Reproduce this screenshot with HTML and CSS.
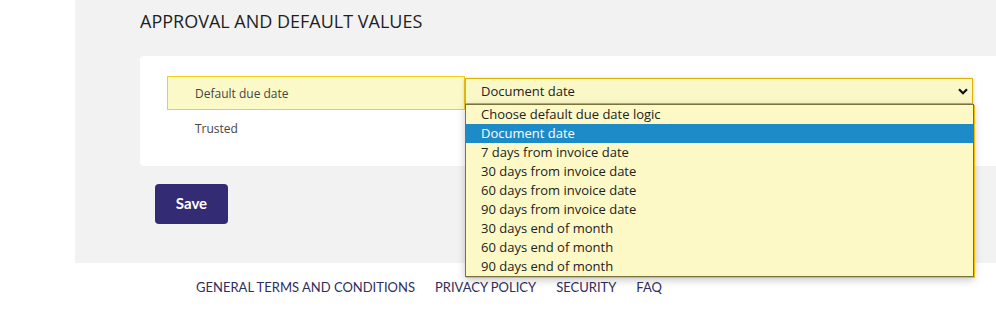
FILE: index.html
```html
<!DOCTYPE html>
<html lang="en">
<head>
  <meta charset="UTF-8">
  <meta name="viewport" content="width=device-width, initial-scale=1.0">
  <title>Approval and default values</title>
  <link rel="stylesheet" href="styles.css">
</head>
<body>
  <div class="layout">
    <div class="gutter"></div>
    <main class="main">
      <h2 class="section-title">APPROVAL AND DEFAULT VALUES</h2>

      <div class="card">
        <div class="field-row">
          <div class="field-label active">Default due date</div>
          <div class="select-wrap">
            <div class="select">
              <span>Document date</span>
              <svg class="chevron" width="10" height="7" viewBox="0 0 10 7">
                <path d="M1 1.2 L5 5.2 L9 1.2" fill="none" stroke="#111" stroke-width="2.2"/>
              </svg>
            </div>
            <ul class="options">
              <li>Choose default due date logic</li>
              <li class="selected">Document date</li>
              <li>7 days from invoice date</li>
              <li>30 days from invoice date</li>
              <li>60 days from invoice date</li>
              <li>90 days from invoice date</li>
              <li>30 days end of month</li>
              <li>60 days end of month</li>
              <li>90 days end of month</li>
            </ul>
          </div>
        </div>
        <div class="field-row plain">
          <div class="field-label">Trusted</div>
        </div>
      </div>

      <button class="btn-save">Save</button>
    </main>
  </div>

  <footer class="footer">
    <a href="#">General terms and conditions</a>
    <a href="#">Privacy policy</a>
    <a href="#">Security</a>
    <a href="#">FAQ</a>
  </footer>
</body>
</html>
```

FILE: styles.css
```css
body {
  margin: 0;
  font-family: 'Open Sans', 'Liberation Sans', sans-serif;
  color: #333;
  background-color: #fff;
}
.layout {
  display: flex;
}
.gutter {
  width: 75px;
  flex-shrink: 0;
}
.main {
  flex: 1;
  background-color: #f2f2f2;
  padding: 9px 0 39px 65px;
}
.section-title {
  margin: 0 0 23px;
  font-size: 18px;
  font-weight: 400;
  line-height: 24px;
  color: #1e1e1e;
}
.card {
  background-color: #fff;
  border-radius: 4px 0 0 4px;
  height: 110px;
  box-sizing: border-box;
  padding: 20px 0 0 27px;
}
.field-row {
  display: flex;
  align-items: flex-start;
}
.field-label {
  font-size: 12px;
  color: #444;
}
.field-label.active {
  width: 298px;
  height: 34px;
  box-sizing: border-box;
  display: flex;
  align-items: center;
  padding-left: 27px;
  background-color: #fcf9c8;
  border: 1px solid #f6cf18;
}
.field-row.plain .field-label {
  padding: 10px 0 0 28px;
  line-height: 18px;
}
.select-wrap {
  position: relative;
  margin-top: 2px;
}
.select {
  width: 508px;
  height: 26px;
  box-sizing: border-box;
  display: flex;
  align-items: center;
  justify-content: space-between;
  padding: 0 4px 0 15px;
  font-size: 13px;
  color: #222;
  background-color: #fbf8c7;
  border: 1px solid #ddb400;
  box-shadow: 0 1px 4px rgba(0, 0, 0, 0.25);
}
.chevron {
  display: block;
}
.options {
  position: absolute;
  top: 26px;
  left: 0;
  width: 509px;
  box-sizing: border-box;
  margin: 0;
  padding: 0;
  list-style: none;
  background-color: #fdf9c6;
  border: 1px solid #7a7340;
  box-shadow: 1px 1px 0 #f0c000, 0 3px 8px rgba(0, 0, 0, 0.22);
}
.options li {
  height: 19px;
  line-height: 19px;
  padding-left: 15px;
  font-size: 13px;
  color: #222;
}
.options li.selected {
  background-color: #1e8bc9;
  color: #fff;
}
.btn-save {
  display: block;
  margin: 18px 0 0 15px;
  width: 73px;
  height: 40px;
  padding: 0 0 3px;
  border: none;
  border-radius: 4px;
  background-color: #332b74;
  color: #fff;
  font-family: 'Lato', sans-serif;
  font-size: 15px;
  font-weight: 700;
  cursor: pointer;
}
.footer {
  display: flex;
  gap: 20px;
  padding: 15px 0 0 196px;
}
.footer a {
  font-family: 'Lato', sans-serif;
  font-size: 13px;
  line-height: 18px;
  text-transform: uppercase;
  text-decoration: none;
  color: #2f2d5e;
}
```
